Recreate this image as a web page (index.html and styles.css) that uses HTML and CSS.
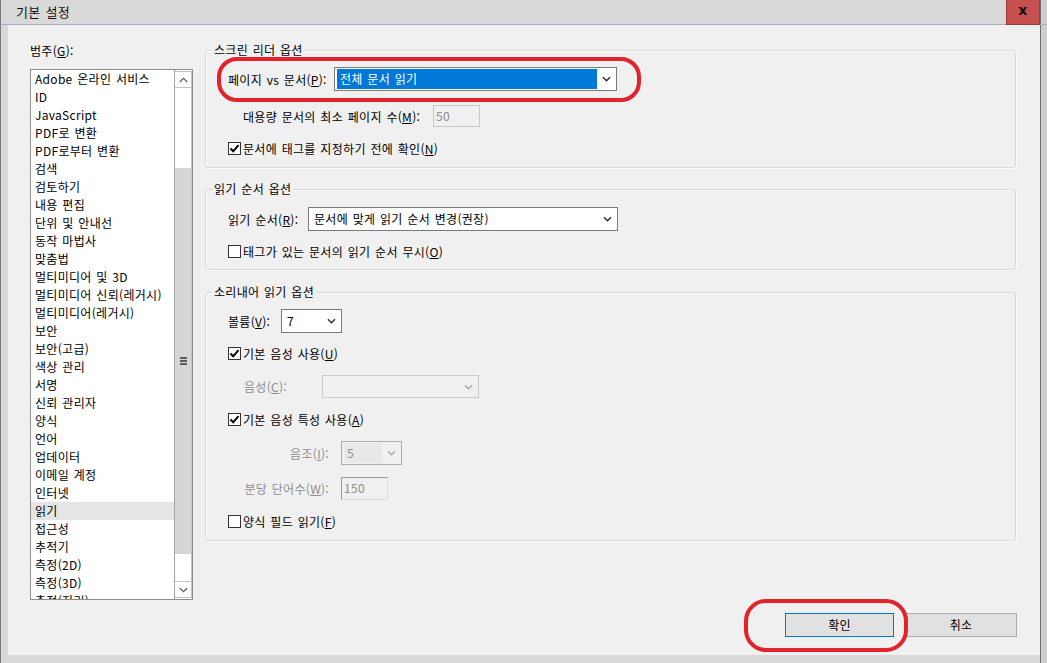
FILE: index.html
```html
<!DOCTYPE html>
<html lang="ko">
<head>
<meta charset="utf-8">
<title>기본 설정</title>
<link rel="stylesheet" href="styles.css">
</head>
<body>
<div class="window">
  <div class="titlebar">
    <span class="title">기본 설정</span>
    <div class="close">x</div>
    <div class="tb-edge"></div>
  </div>
  <div class="frame">
    <div class="content">
      <div class="left">
        <div class="cat-label">범주(<u>G</u>):</div>
        <div class="listbox">
          <div class="items">
            <div class="item">Adobe 온라인 서비스</div>
            <div class="item">ID</div>
            <div class="item">JavaScript</div>
            <div class="item">PDF로 변환</div>
            <div class="item">PDF로부터 변환</div>
            <div class="item">검색</div>
            <div class="item">검토하기</div>
            <div class="item">내용 편집</div>
            <div class="item">단위 및 안내선</div>
            <div class="item">동작 마법사</div>
            <div class="item">맞춤법</div>
            <div class="item">멀티미디어 및 3D</div>
            <div class="item">멀티미디어 신뢰(레거시)</div>
            <div class="item">멀티미디어(레거시)</div>
            <div class="item">보안</div>
            <div class="item">보안(고급)</div>
            <div class="item">색상 관리</div>
            <div class="item">서명</div>
            <div class="item">신뢰 관리자</div>
            <div class="item">양식</div>
            <div class="item">언어</div>
            <div class="item">업데이터</div>
            <div class="item">이메일 계정</div>
            <div class="item">인터넷</div>
            <div class="item selected">읽기</div>
            <div class="item">접근성</div>
            <div class="item">추적기</div>
            <div class="item">측정(2D)</div>
            <div class="item">측정(3D)</div>
            <div class="item">측정(지리)</div>
          </div>
          <div class="scrollbar">
            <div class="sb-btn"><svg width="9" height="6" viewBox="0 0 9 6"><path d="M0.8 5 L4.5 1.3 L8.2 5" fill="none" stroke="#606060" stroke-width="1.2"/></svg></div>
            <div class="sb-track">
              <div class="sb-thumb">
                <div class="grip"><span></span><span></span><span></span></div>
              </div>
            </div>
            <div class="sb-btn"><svg width="9" height="6" viewBox="0 0 9 6"><path d="M0.8 1 L4.5 4.7 L8.2 1" fill="none" stroke="#606060" stroke-width="1.2"/></svg></div>
          </div>
        </div>
      </div>

      <div class="right">
        <div class="group g1">
          <div class="gtitle">스크린 리더 옵션</div>
          <div class="row r-g1a">
            <span class="lbl w106">페이지 vs 문서(<u>P</u>):</span>
            <div class="select w283 focus">
              <span class="val sel">전체 문서 읽기</span>
              <span class="chev"><svg width="9" height="6" viewBox="0 0 9 6"><path d="M1 1.2 L4.5 4.7 L8 1.2" fill="none" stroke="#333" stroke-width="1.6"/></svg></span>
            </div>
          </div>
          <div class="row r-g1b indent">
            <span class="lbl w190">대용량 문서의 최소 페이지 수(<u>M</u>):</span>
            <div class="input disabled w47">50</div>
          </div>
          <div class="row r-check r-g1c">
            <span class="cb checked"><svg width="11" height="11" viewBox="0 0 11 11"><path d="M1.5 5.5 L4.2 8.3 L9.5 2.2" fill="none" stroke="#000" stroke-width="2"/></svg></span>
            <span class="cb-text">문서에 태그를 지정하기 전에 확인(<u>N</u>)</span>
          </div>
        </div>

        <div class="group g2">
          <div class="gtitle">읽기 순서 옵션</div>
          <div class="row r-g2a">
            <span class="lbl w80">읽기 순서(<u>R</u>):</span>
            <div class="select w310">
              <span class="val">문서에 맞게 읽기 순서 변경(권장)</span>
              <span class="chev"><svg width="9" height="6" viewBox="0 0 9 6"><path d="M1 1.2 L4.5 4.7 L8 1.2" fill="none" stroke="#333" stroke-width="1.6"/></svg></span>
            </div>
          </div>
          <div class="row r-check r-g2b">
            <span class="cb"></span>
            <span class="cb-text">태그가 있는 문서의 읽기 순서 무시(<u>O</u>)</span>
          </div>
        </div>

        <div class="group g3">
          <div class="gtitle">소리내어 읽기 옵션</div>
          <div class="row r-g3a">
            <span class="lbl w53">볼륨(<u>V</u>):</span>
            <div class="select w61">
              <span class="val">7</span>
              <span class="chev"><svg width="9" height="6" viewBox="0 0 9 6"><path d="M1 1.2 L4.5 4.7 L8 1.2" fill="none" stroke="#333" stroke-width="1.6"/></svg></span>
            </div>
          </div>
          <div class="row r-check r-g3b">
            <span class="cb checked"><svg width="11" height="11" viewBox="0 0 11 11"><path d="M1.5 5.5 L4.2 8.3 L9.5 2.2" fill="none" stroke="#000" stroke-width="2"/></svg></span>
            <span class="cb-text">기본 음성 사용(<u>U</u>)</span>
          </div>
          <div class="row r-g3c indent16">
            <span class="lbl w78 grey">음성(<u>C</u>):</span>
            <div class="select w157 disabled">
              <span class="val"></span>
              <span class="chev"><svg width="9" height="6" viewBox="0 0 9 6"><path d="M1 1.2 L4.5 4.7 L8 1.2" fill="none" stroke="#a8a8a8" stroke-width="1.4"/></svg></span>
            </div>
          </div>
          <div class="row r-check r-g3d">
            <span class="cb checked"><svg width="11" height="11" viewBox="0 0 11 11"><path d="M1.5 5.5 L4.2 8.3 L9.5 2.2" fill="none" stroke="#000" stroke-width="2"/></svg></span>
            <span class="cb-text">기본 음성 특성 사용(<u>A</u>)</span>
          </div>
          <div class="row r-g3e">
            <span class="lbl w113 ralign grey">음조(<u>I</u>):</span>
            <div class="select w61 disabled dark">
              <span class="val cell">5</span>
              <span class="chev"><svg width="9" height="6" viewBox="0 0 9 6"><path d="M1 1.2 L4.5 4.7 L8 1.2" fill="none" stroke="#a8a8a8" stroke-width="1.4"/></svg></span>
            </div>
          </div>
          <div class="row r-g3f">
            <span class="lbl w113 ralign grey">분당 단어수(<u>W</u>):</span>
            <div class="input disabled sunken w47">150</div>
          </div>
          <div class="row r-check r-g3g">
            <span class="cb"></span>
            <span class="cb-text">양식 필드 읽기(<u>F</u>)</span>
          </div>
        </div>

        <div class="buttons">
          <div class="btn default">확인</div>
          <div class="btn cancel">취소</div>
        </div>
      </div>

      <div class="annot a1"></div>
      <div class="annot a2"></div>
    </div>
    <div class="edge"></div>
  </div>
</div>
</body>
</html>
```

FILE: styles.css
```css
* { box-sizing: border-box; }

html, body {
  margin: 0;
  padding: 0;
  background: #d6d6d6;
}

body {
  font-family: "Noto Sans CJK KR", "Malgun Gothic", "Noto Sans", sans-serif;
  font-size: 12px;
  letter-spacing: 0.3px;
  word-spacing: 1px;
  color: #000;
}

u { text-decoration: underline; text-underline-offset: 1px; }

.window {
  width: 1047px;
  height: 663px;
  display: flex;
  flex-direction: column;
  overflow: hidden;
}

/* ---------- title bar ---------- */
.titlebar {
  height: 25px;
  flex: none;
  display: flex;
  align-items: stretch;
  background: #d9d9d9;
  border-bottom: 1px solid #aaacbb;
  border-left: 1px solid #7a7a7a;
}

.title {
  flex: 1;
  padding-left: 15px;
  font-size: 13px;
  line-height: 24px;
  color: #111;
}

.close {
  width: 34px;
  background: #c75050;
  border: 1px solid #9a3d3d;
  border-top: none;
  margin-bottom: -1px;
  font-family: "DejaVu Sans", sans-serif;
  font-weight: bold;
  font-size: 14px;
  line-height: 20px;
  text-align: center;
  color: #111;
}

.tb-edge {
  width: 7px;
  background: #cfcfcf;
  border-left: 1px solid #6f6f6f;
}

/* ---------- frame ---------- */
.frame {
  flex: 1;
  display: flex;
  background: #d9d9d9;
  border-left: 1px solid #7a7a7a;
  padding-left: 7px;
  padding-bottom: 8px;
}

.edge {
  width: 7px;
  margin-bottom: -8px;
  background: #cfcfcf;
  border-left: 1px solid #6f6f6f;
}

.content {
  position: relative;
  width: 1032px;
  height: 630px;
  background: #f0f0f0;
  display: flex;
  padding: 16px 24px 18px 22px;
}

/* ---------- left column ---------- */
.left {
  width: 163px;
  flex: none;
  display: flex;
  flex-direction: column;
}

.cat-label {
  height: 20px;
  line-height: 20px;
  margin-bottom: 8px;
}

.listbox {
  height: 531px;
  border: 1px solid #8d8d8d;
  background: #fff;
  display: flex;
}

.items {
  flex: 1;
  overflow: hidden;
}

.item {
  height: 18px;
  line-height: 18px;
  padding-left: 4px;
  white-space: nowrap;
}

.item.selected {
  background: #e5e5e5;
}

.scrollbar {
  width: 18px;
  flex: none;
  display: flex;
  flex-direction: column;
  border-left: 1px solid #a6a6a6;
  background: #fff;
  padding: 1px 0;
}

.sb-btn {
  height: 17px;
  border: 1px solid #c3c3c3;
  border-left: none;
  display: flex;
  align-items: center;
  justify-content: center;
  background: #fff;
}

.sb-track {
  flex: 1;
  display: flex;
  flex-direction: column;
  border-right: 1px solid #c3c3c3;
}

.sb-thumb {
  margin-top: 80px;
  height: 386px;
  background: #d6d6d6;
  display: flex;
  align-items: center;
  justify-content: center;
}

.grip {
  display: flex;
  flex-direction: column;
  gap: 1px;
}

.grip span {
  width: 7px;
  height: 2px;
  background: #5e5e5e;
}

/* ---------- right column ---------- */
.right {
  width: 811px;
  margin-left: 12px;
  display: flex;
  flex-direction: column;
}

.group {
  border: 1px solid #dadada;
  border-radius: 3px;
  padding-left: 22px;
  box-shadow: inset 1px 1px 0 #fbfbfb, 1px 1px 0 #fbfbfb;
}

.g1 { margin-top: 9px; padding-bottom: 10px; }
.g2 { margin-top: 21px; padding-bottom: 9px; }
.g3 { margin-top: 22px; padding-bottom: 10px; }

.gtitle {
  width: fit-content;
  height: 16px;
  line-height: 16px;
  margin-top: -9px;
  margin-left: -16px;
  padding: 0 2px;
  background: #f0f0f0;
}

.row {
  display: flex;
  align-items: center;
  height: 24px;
  white-space: nowrap;
}

.r-check { height: 18px; }

.indent { padding-left: 15px; }
.indent16 { padding-left: 16px; }

.r-g1a { margin-top: 9px; }
.r-g1b { margin-top: 14px; height: 22px; }
.r-g1c { margin-top: 12px; }

.r-g2a { margin-top: 10px; }
.r-g2b { margin-top: 11px; }

.r-g3a { margin-top: 9px; }
.r-g3b { margin-top: 11px; }
.r-g3c { margin-top: 13px; height: 23px; }
.r-g3d { margin-top: 12px; }
.r-g3e { margin-top: 13px; }
.r-g3f { margin-top: 12px; height: 23px; }
.r-g3g { margin-top: 12px; }

.lbl { flex: none; }
.lbl.ralign { text-align: right; padding-right: 12px; }
.grey { color: #8e8e8e; }

.w47 { width: 47px; }
.w53 { width: 53px; }
.w61 { width: 61px; }
.w78 { width: 78px; }
.w80 { width: 80px; }
.w106 { width: 106px; }
.w113 { width: 113px; }
.w157 { width: 157px; }
.w190 { width: 190px; }
.w283 { width: 283px; }
.w310 { width: 310px; }

/* dropdowns */
.select {
  height: 100%;
  display: flex;
  align-items: center;
  border: 1px solid #7a7a7a;
  background: #fff;
  padding-left: 2px;
}

.select .val {
  flex: 1;
  height: 20px;
  line-height: 20px;
  padding-left: 3px;
  overflow: hidden;
}

.select .val.sel {
  background: #0078d7;
  color: #fff;
}

.select .chev {
  width: 19px;
  flex: none;
  display: flex;
  justify-content: center;
  align-items: center;
}

.select.disabled {
  background: #f0f0f0;
  border-color: #cbcbcb;
  color: #8e8e8e;
}

.select.disabled.dark {
  border-color: #adadad;
}

.select .val.cell {
  background: #e8e8e8;
}

/* text inputs */
.input {
  height: 100%;
  border: 1px solid #c8c8c8;
  background: #f0f0f0;
  color: #8e8e8e;
  line-height: 20px;
  padding-left: 2px;
}

.input.sunken {
  border-color: #9a9a9a #dcdcdc #dcdcdc #9a9a9a;
}

/* checkboxes */
.cb {
  width: 13px;
  height: 13px;
  flex: none;
  border: 1px solid #333;
  background: #fff;
  display: flex;
  align-items: center;
  justify-content: center;
}

.cb-text { margin-left: 2px; }

/* buttons */
.buttons {
  margin-top: auto;
  margin-right: -1px;
  display: flex;
  justify-content: flex-end;
  gap: 11px;
}

.btn {
  height: 24px;
  line-height: 22px;
  text-align: center;
  background: #e1e1e1;
  border: 1px solid #adadad;
}

.btn.default { width: 109px; border-color: #0078d7; }
.btn.cancel { width: 112px; }

/* red annotations drawn over the dialog */
.annot {
  position: absolute;
  border: 4px solid #e3222b;
  border-radius: 20px;
}

.a1 { left: 209px; top: 32px; width: 424px; height: 45px; }
.a2 { left: 736px; top: 574px; width: 164px; height: 53px; border-radius: 22px; }
```
